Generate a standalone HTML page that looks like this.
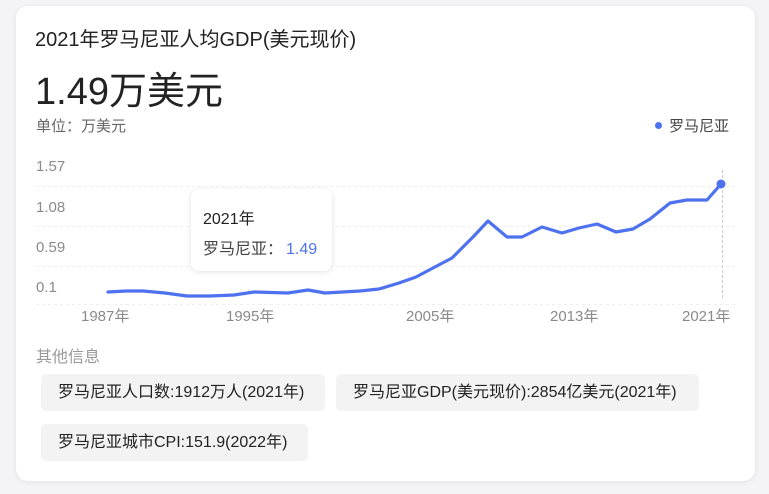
<!DOCTYPE html>
<html><head><meta charset="utf-8"><style>
*{margin:0;padding:0;box-sizing:border-box}
body{width:769px;height:494px;background:#f4f4f6;font-family:"Liberation Sans","Noto Sans CJK SC",sans-serif;position:relative;overflow:hidden}
.card{position:absolute;left:16px;top:6px;width:739px;height:475px;background:#fff;border-radius:12px;box-shadow:0 1px 6px rgba(0,0,0,.08)}
.a{position:absolute;white-space:nowrap}
.chip{position:absolute;height:37px;background:#f3f3f3;border-radius:5px;font-size:16px;color:#222;line-height:37px;padding-left:17px}
.ax{font-size:15px;color:#8a8a8a}
</style></head><body>
<div class="card"></div>
<div class="a" style="left:35px;top:23px;font-size:20px;color:#222">2021年罗马尼亚人均GDP(美元现价)</div>
<div class="a" style="left:35px;top:60px;font-size:38px;color:#222">1.49万美元</div>
<div class="a" style="left:36px;top:115px;font-size:15px;color:#666">单位：万美元</div>
<div class="a" style="left:655px;top:115px;font-size:15px;color:#444"><span style="display:inline-block;width:7px;height:7px;border-radius:50%;background:#4e72ef;margin-right:7px;vertical-align:2px"></span>罗马尼亚</div>
<div class="a ax" style="left:36px;top:158px">1.57</div>
<div class="a ax" style="left:36px;top:199px">1.08</div>
<div class="a ax" style="left:36px;top:239px">0.59</div>
<div class="a ax" style="left:36px;top:279px">0.1</div>
<div class="a ax" style="left:81px;top:305px">1987年</div>
<div class="a ax" style="left:226px;top:305px">1995年</div>
<div class="a ax" style="left:406px;top:305px">2005年</div>
<div class="a ax" style="left:550px;top:305px">2013年</div>
<div class="a ax" style="left:682px;top:305px">2021年</div>
<svg class="a" style="left:0;top:0" width="769" height="494">
<g stroke="#eee" stroke-dasharray="3,3" stroke-width="1">
<line x1="36" y1="186.5" x2="736" y2="186.5"/><line x1="36" y1="226.5" x2="736" y2="226.5"/><line x1="36" y1="266.5" x2="736" y2="266.5"/><line x1="36" y1="304.5" x2="736" y2="304.5"/></g>
<line x1="722.5" y1="170" x2="722.5" y2="298" stroke="#ccc" stroke-dasharray="3,2"/>
<polyline fill="none" stroke="#4e72ef" stroke-width="3.2" stroke-linejoin="round" stroke-linecap="round" points="108,292 126,291 143,291 165,293 187,296 210,296 234,295 254,292 288,293 308,290 325,293 360,291 379,289 399,283 416,277 433,268 452,258 473,237 488,221 507,237 522,237 542,227 562,233 579,228 597,224 616,232 633,229 650,219 670,203 687,200 707,200 721,184"/>
<circle cx="721" cy="184" r="4.5" fill="#4e72ef"/>
</svg>
<div class="a" style="left:191px;top:189px;width:141px;height:82px;background:#fff;border-radius:8px;box-shadow:0 1px 6px rgba(0,0,0,.12)"></div>
<div class="a" style="left:203px;top:205px;font-size:16px;color:#222">2021年</div>
<div class="a" style="left:203px;top:235px;font-size:16px;color:#444">罗马尼亚：<span style="color:#4e72ef;margin-left:3px">1.49</span></div>
<div class="a" style="left:36px;top:343px;font-size:16px;color:#999">其他信息</div>
<div class="chip" style="left:41px;top:374px;width:284px">罗马尼亚人口数:1912万人(2021年)</div>
<div class="chip" style="left:336px;top:374px;width:363px">罗马尼亚GDP(美元现价):2854亿美元(2021年)</div>
<div class="chip" style="left:41px;top:424px;width:267px">罗马尼亚城市CPI:151.9(2022年)</div>
</body></html>
